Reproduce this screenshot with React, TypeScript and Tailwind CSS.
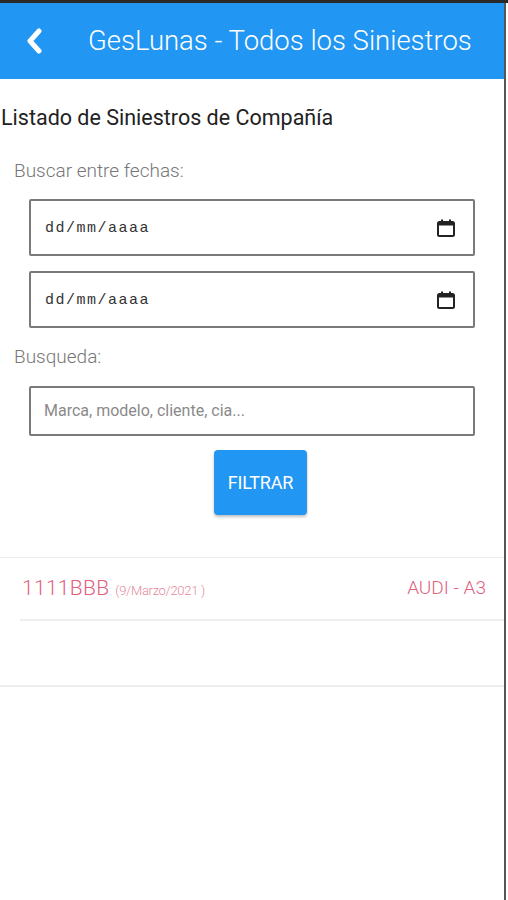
import React from "react";

function CalendarIcon() {
  return (
    <svg width="20" height="20" viewBox="0 0 20 20" fill="none">
      <rect x="2" y="4" width="16" height="14" rx="1.5" stroke="#222" strokeWidth="2" />
      <rect x="2" y="4" width="16" height="3.5" fill="#222" />
      <rect x="5" y="1.5" width="2" height="3" fill="#222" />
      <rect x="13" y="1.5" width="2" height="3" fill="#222" />
    </svg>
  );
}

function DateField() {
  return (
    <div className="flex h-[57px] items-center justify-between border-2 border-[#7a7a7a] rounded-[2px] pl-[14px] pr-[17px]">
      <span className="text-[15px] leading-none tracking-[1.5px] text-[#333] pt-[2px]" style={{ fontFamily: '"Liberation Mono", monospace' }}>
        dd/mm/aaaa
      </span>
      <CalendarIcon />
    </div>
  );
}

export default function App() {
  return (
    <div className="w-[508px] h-[900px] bg-white flex flex-col overflow-hidden" style={{ fontFamily: 'Roboto, "Noto Sans", sans-serif' }}>
      <div className="h-[3px] bg-[#2a2a2a] shrink-0" />
      <div className="flex flex-1 min-h-0">
        <div className="flex-1 flex flex-col min-w-0">
          <div className="h-[76px] bg-[#2196f3] flex items-center shrink-0">
            <svg className="ml-[25px]" width="18" height="26" viewBox="0 0 18 26" fill="none">
              <path d="M14 3 L5 13 L14 23" stroke="white" strokeWidth="5" strokeLinecap="round" strokeLinejoin="round" />
            </svg>
            <span className="ml-[45px] text-white text-[27.5px] font-light leading-none">GesLunas - Todos los Siniestros</span>
          </div>

          <div className="pt-[26px] pl-[1px] text-[21.5px] text-[#222] leading-[26px]">Listado de Siniestros de Compañía</div>

          <div className="mt-[29px] pl-[14px] text-[19px] font-light text-[#777] leading-[22px]">Buscar entre fechas:</div>

          <div className="mt-[17px] pl-[29px] pr-[29px] flex flex-col gap-[15px]">
            <DateField />
            <DateField />
          </div>

          <div className="mt-[18px] pl-[14px] text-[19px] font-light text-[#777] leading-[22px]">Busqueda:</div>

          <div className="mt-[18px] pl-[29px] pr-[29px]">
            <div className="h-[50px] border-2 border-[#7a7a7a] rounded-[2px] flex items-center pl-[13px] text-[16px] text-[#8a8a8a]">
              Marca, modelo, cliente, cia...
            </div>
          </div>

          <div className="mt-[14px] flex justify-center pl-[17px]">
            <div className="w-[93px] h-[65px] bg-[#2196f3] rounded-[4px] shadow-[0_2px_3px_rgba(0,0,0,0.25)] flex items-center justify-center text-white text-[18px] tracking-[-0.2px]">
              FILTRAR
            </div>
          </div>

          <div className="mt-[42px] border-t border-[#ececec]" />
          <div className="pl-[20px]">
            <div className="h-[63px] flex items-center justify-between pl-[2px] pr-[18px] border-b-2 border-[#eeeeee]">
              <div className="flex items-baseline text-[#e0607e] font-light">
                <span className="text-[21px] tracking-[0.3px]">1111BBB</span>
                <span className="ml-[6px] text-[13px] text-[#e48a9c] tracking-[-0.3px]">(9/Marzo/2021 )</span>
              </div>
              <span className="text-[19px] font-light text-[#e0607e]">AUDI - A3</span>
            </div>
          </div>
          <div className="mt-[64px] border-t-2 border-[#eeeeee]" />
        </div>
        <div className="w-[4px] bg-white shrink-0 border-l-2 border-[#555]" />
      </div>
    </div>
  );
}
